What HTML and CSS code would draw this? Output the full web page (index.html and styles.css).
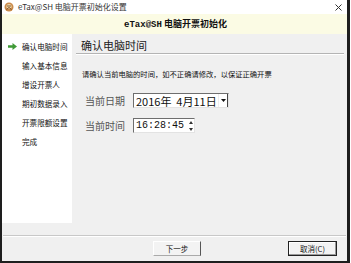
FILE: index.html
```html
<!DOCTYPE html>
<html lang="zh-CN">
<head>
    <meta charset="UTF-8">
    <meta name="viewport" content="width=device-width, initial-scale=1.0">
    <title>eTax@SH 电脑开票初始化设置</title>
    <link rel="stylesheet" href="styles.css">
</head>
<body>

  <div class="window">

    <div class="titlebar">
      <svg class="app-icon" width="10" height="10" viewBox="0 0 10 10">
        <circle cx="5" cy="5" r="4.5" fill="#c98a4b"/>
        <circle cx="5" cy="4.5" r="2.6" fill="#f1d7a8"/>
        <path d="M2.5 7.5 L5 5.5 L7.5 7.5" stroke="#7a4a1e" stroke-width="1" fill="none"/>
        <circle cx="4" cy="4" r="0.7" fill="#5a3210"/>
        <circle cx="6" cy="4" r="0.7" fill="#5a3210"/>
      </svg>
      <span class="title-text">eTax@SH 电脑开票初始化设置</span>
      <svg class="close" width="7" height="7" viewBox="0 0 7 7">
        <path d="M0.5 0.5 L6.5 6.5 M6.5 0.5 L0.5 6.5" stroke="#333" stroke-width="1"/>
      </svg>
    </div>

    <div class="banner">
      <span class="latin">eTax@SH</span> 电脑开票初始化
    </div>

    <div class="main">

      <ul class="steps">
        <li class="step current">
          <span class="mark">
            <svg width="9" height="7" viewBox="0 0 9 7">
              <path d="M0 2.2 H4.5 V0 L9 3.5 L4.5 7 V4.8 H0 Z" fill="#3f9a36"/>
            </svg>
          </span>确认电脑时间
        </li>
        <li class="step"><span class="mark"></span>输入基本信息</li>
        <li class="step"><span class="mark"></span>增设开票人</li>
        <li class="step"><span class="mark"></span>期初数据录入</li>
        <li class="step"><span class="mark"></span>开票限额设置</li>
        <li class="step"><span class="mark"></span>完成</li>
      </ul>

      <div class="panel">
        <div class="panel-title">确认电脑时间</div>
        <p class="hint">请确认当前电脑的时间，如不正确请修改，以保证正确开票</p>

        <div class="field">
          <span class="label">当前日期</span>
          <div class="datebox">
            <span class="value">2016年&nbsp;&nbsp;4月11日</span>
            <span class="drop">
              <svg width="5" height="3" viewBox="0 0 5 3"><path d="M0 0 H5 L2.5 3 Z" fill="#111"/></svg>
            </span>
          </div>
        </div>

        <div class="field">
          <span class="label">当前时间</span>
          <div class="timebox">
            <span class="value mono">16:28:45</span>
            <span class="spin">
              <svg width="4" height="10" viewBox="0 0 4 10">
                <path d="M0 3 L2 0 L4 3 Z M0 7 L2 10 L4 7 Z" fill="#333"/>
              </svg>
            </span>
          </div>
        </div>
      </div>

    </div>

    <div class="footer">
      <div class="sep"></div>
      <div class="buttons">
        <button class="btn next">下一步</button>
        <button class="btn cancel">取消(C)</button>
      </div>
    </div>

  </div>

</body>
</html>
```

FILE: styles.css
```css
body {
    margin: 0;
    background-color: #fff;
    font-family: "Noto Sans CJK SC", sans-serif;
    color: #222;
}

.window {
    width: 350px;
    height: 263px;
    box-sizing: border-box;
    border-left: 2px solid #1e1e1e;
    border-right: 3px solid #1e1e1e;
    border-bottom: 2px solid #1e1e1e;
    background-color: #f0f0f0;
    display: flex;
    flex-direction: column;
    overflow: hidden;
}

/* barre de titre */
.titlebar {
    height: 14px;
    background-color: #fff;
    display: flex;
    align-items: center;
    padding-left: 2px;
}

.app-icon {
    margin-right: 4px;
}

.title-text {
    font-size: 8px;
    line-height: 14px;
    color: #333;
    flex: 1;
}

.close {
    margin-right: 5px;
}

.banner {
    height: 20px;
    background-color: #fbfbe4;
    text-align: center;
    font-size: 9px;
    line-height: 20px;
    font-weight: bold;
    color: #111;
    padding-left: 2px;
}

.banner .latin {
    font-family: "Liberation Mono", monospace;
}

.main {
    height: 189px;
    display: flex;
}

/* etapes a gauche */
.steps {
    width: 70px;
    margin: 0;
    padding: 3px 0 0 0;
    list-style: none;
    background-color: #fff;
}

.step {
    display: flex;
    align-items: center;
    height: 19px;
    font-size: 7.6px;
    color: #111;
    padding-left: 6px;
}

.mark {
    width: 14px;
    display: flex;
    align-items: center;
}

.panel {
    flex: 1;
}

.panel-title {
    margin: 0 3px 0 4px;
    padding: 4px 0 0 5px;
    font-size: 11px;
    line-height: 14px;
    height: 15px;
    border-bottom: 1px solid #b4b4b4;
    box-shadow: 0 1px 0 #fff;
    color: #222;
}

.hint {
    margin: 15px 0 0 10px;
    font-size: 7.3px;
    line-height: 10px;
    color: #111;
}

.field {
    display: flex;
    align-items: center;
    margin: 14px 0 0 13px;
    height: 15px;
}

.field + .field {
    margin-top: 10px;
}

.label {
    width: 48px;
    font-size: 10px;
    color: #555;
}

.datebox, .timebox {
    height: 15px;
    box-sizing: border-box;
    background-color: #fff;
    border-top: 1px solid #6e6e6e;
    border-left: 1px solid #6e6e6e;
    border-right: 1px solid #e3e3e3;
    border-bottom: 1px solid #e3e3e3;
    display: flex;
    align-items: center;
    padding-left: 2px;
}

.datebox {
    width: 96px;
}

.timebox {
    width: 62px;
}

.value {
    font-size: 11px;
    color: #111;
    flex: 1;
    white-space: nowrap;
}

.mono {
    font-family: "Liberation Mono", monospace;
    font-size: 10px;
}

.drop {
    width: 10px;
    height: 13px;
    box-sizing: border-box;
    border-left: 1px solid #eee;
    border-right: 1px solid #444;
    display: flex;
    align-items: center;
    justify-content: center;
}

.spin {
    width: 7px;
    display: flex;
    align-items: center;
    justify-content: center;
}

/* bas de fenetre */
.footer {
    flex: 1;
    padding-top: 12px;
}

.sep {
    height: 1px;
    margin: 0 1px;
    background-color: #c8c8c8;
    border-bottom: 1px solid #fff;
}

.buttons {
    display: flex;
    justify-content: flex-end;
    gap: 87px;
    margin-top: 4px;
    padding-right: 10px;
}

.btn {
    height: 15px;
    padding: 0;
    font-family: "Noto Sans CJK SC", sans-serif;
    font-size: 7.5px;
    color: #111;
    background-color: #f3f3f3;
}

.next {
    width: 48px;
    border-top: 1px solid #fff;
    border-left: 1px solid #fff;
    border-right: 1px solid #555;
    border-bottom: 1px solid #aaa;
}

.cancel {
    width: 49px;
    border: 1px solid #222;
    box-shadow: inset -1px -1px 0 #999, inset 1px 1px 0 #fff;
}
```
